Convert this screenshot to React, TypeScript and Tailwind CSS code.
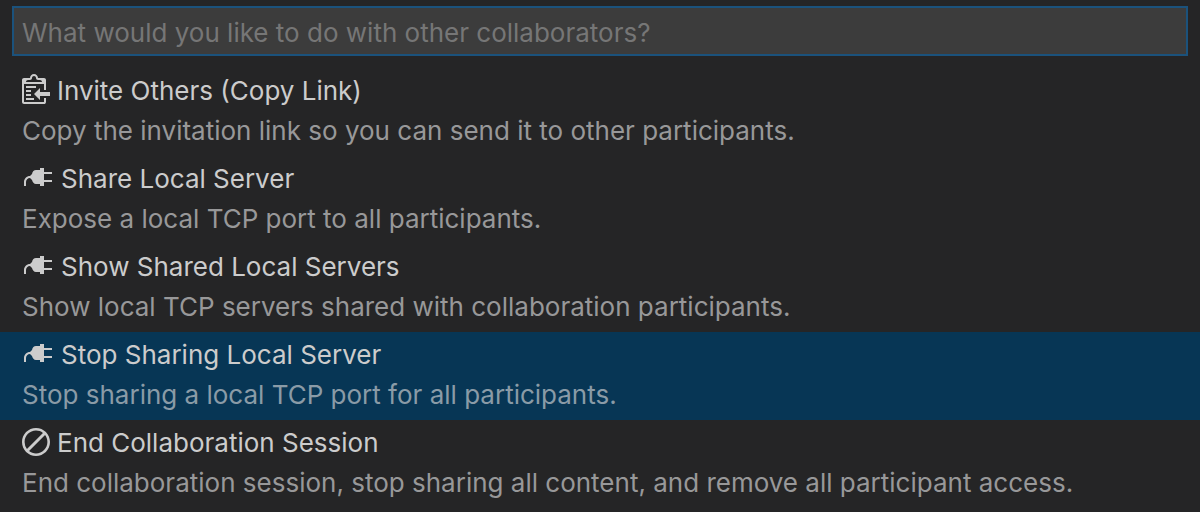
import type { ReactNode } from "react";

function ClippyIcon() {
  return (
    <svg className="mb-0.5 h-8 w-7 shrink-0" viewBox="0 1 14 16" fill="currentColor" aria-hidden="true">
      <path
        fillRule="evenodd"
        d="M2 13h4v1H2v-1zm5-6H2v1h5V7zm2 3V8l-3 3 3 3v-2h5v-2H9zM4.5 9H2v1h2.500V9zM2 12h2.500v-1H2v1zm9 1h1v2c-.02.28-.11.52-.3.7-.19.18-.42.28-.7.3H1c-.55 0-1-.45-1-1V4c0-.55.45-1 1-1h3c0-1.110.89-2 2-2 1.110 0 2 .89 2 2h3c.55 0 1 .45 1 1v5h-1V6H1v9h10v-2zM2 5h8c0-.55-.45-1-1-1H8c-.55 0-1-.45-1-1s-.45-1-1-1-1 .45-1 1-.45 1-1 1H3c-.55 0-1 .45-1 1z"
      />
    </svg>
  );
}

function PlugIcon() {
  return (
    <svg className="mb-0.5 h-8 w-8 shrink-0" viewBox="-1 0 16 16" fill="currentColor" aria-hidden="true">
      <path
        fillRule="evenodd"
        d="M14 6V5h-4V3H8v1H6c-1.03 0-1.77.81-2 2L3 7c-1.660 0-3 1.340-3 3v2h1v-2c0-1.110.89-2 2-2l1 1c.25 1.160.98 2 2 2h2v1h2v-2h4V9h-4V6h4z"
      />
    </svg>
  );
}

function CircleSlashIcon() {
  return (
    <svg className="mb-0.5 h-8 w-7 shrink-0" viewBox="0 0 14 16" fill="currentColor" aria-hidden="true">
      <path
        fillRule="evenodd"
        d="M7 1C3.140 1 0 4.140 0 8s3.140 7 7 7 7-3.140 7-7-3.140-7-7-7zm0 1.300c1.300 0 2.500.44 3.470 1.170l-8 8A5.755 5.755 0 0 1 1.300 8c0-3.140 2.560-5.700 5.700-5.700zm0 11.410c-1.300 0-2.500-.44-3.470-1.170l8-8c.73.97 1.170 2.170 1.170 3.470 0 3.140-2.560 5.700-5.700 5.700z"
      />
    </svg>
  );
}

type Action = { icon: ReactNode; label: string; detail: string; selected?: boolean };

const actions: Action[] = [
  {
    icon: <ClippyIcon />,
    label: "Invite Others (Copy Link)",
    detail: "Copy the invitation link so you can send it to other participants.",
  },
  {
    icon: <PlugIcon />,
    label: "Share Local Server",
    detail: "Expose a local TCP port to all participants.",
  },
  {
    icon: <PlugIcon />,
    label: "Show Shared Local Servers",
    detail: "Show local TCP servers shared with collaboration participants.",
  },
  {
    icon: <PlugIcon />,
    label: "Stop Sharing Local Server",
    detail: "Stop sharing a local TCP port for all participants.",
    selected: true,
  },
  {
    icon: <CircleSlashIcon />,
    label: "End Collaboration Session",
    detail: "End collaboration session, stop sharing all content, and remove all participant access.",
  },
];

export default function App() {
  return (
    <main className="min-h-screen bg-[#252526] font-['Inter','Liberation_Sans',sans-serif] text-[26px] leading-10 text-[#cccccc]">
      <div className="px-3 pt-1.5 pb-3">
        <input
          type="text"
          aria-label="Choose a collaboration action"
          placeholder="What would you like to do with other collaborators?"
          className="block h-[50px] w-full border-2 border-[#1b527c] bg-[#3c3c3c] px-2 pt-0.5 outline-none placeholder:text-[#767676]"
        />
      </div>
      <ul>
        {actions.map((action) => (
          <li key={action.label}>
            <button
              type="button"
              aria-current={action.selected}
              className={
                action.selected
                  ? "block w-full bg-[#073655] px-[22px] pt-[3px] pb-[5px] text-left"
                  : "block w-full px-[22px] pt-[3px] pb-[5px] text-left"
              }
            >
              <span className="flex h-10 items-center gap-[7px]">
                {action.icon}
                <span>{action.label}</span>
              </span>
              <span className={action.selected ? "block text-[#8a9ba7]" : "block text-[#989899]"}>
                {action.detail}
              </span>
            </button>
          </li>
        ))}
      </ul>
    </main>
  );
}
